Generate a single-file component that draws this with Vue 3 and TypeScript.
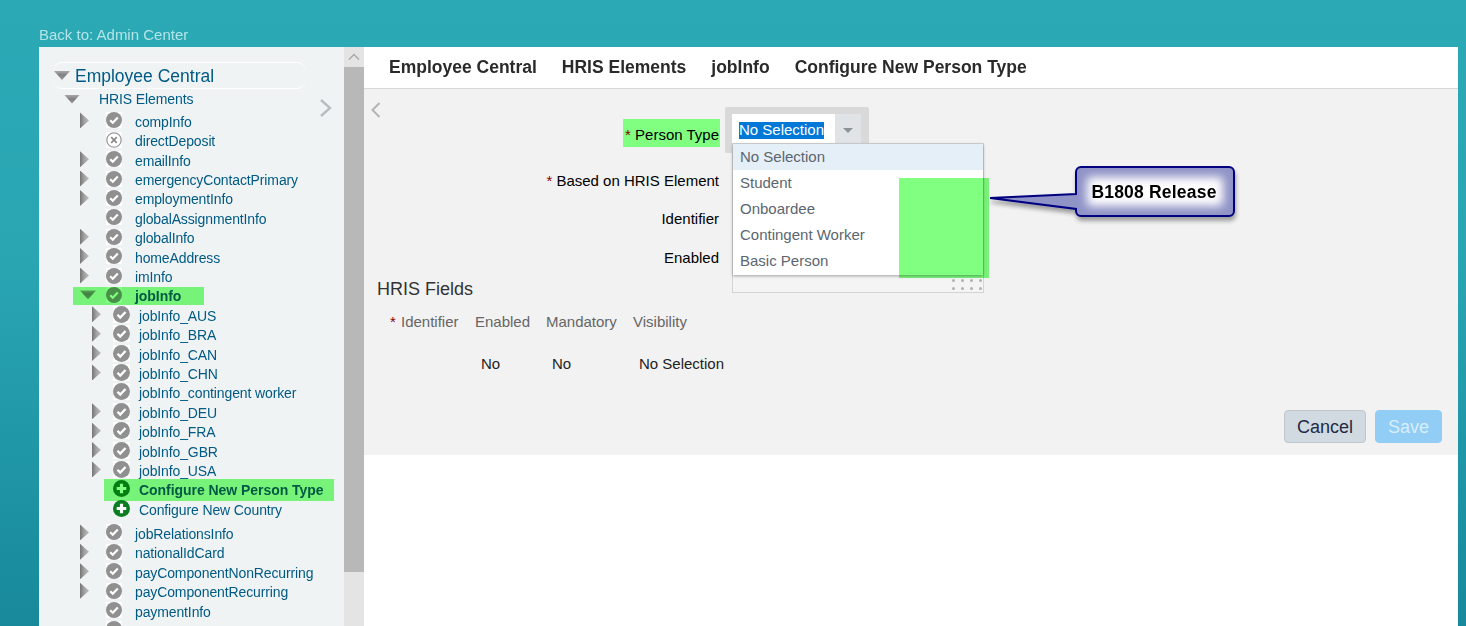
<script setup lang="ts">
interface Row { label: string; level: 1 | 2; arrow?: boolean; open?: boolean; icon: 'check' | 'cross' | 'plus'; mark?: boolean; gap?: boolean }
const rows: Row[] = [
  { label: 'compInfo', level: 1, arrow: true, icon: 'check' },
  { label: 'directDeposit', level: 1, icon: 'cross' },
  { label: 'emailInfo', level: 1, arrow: true, icon: 'check' },
  { label: 'emergencyContactPrimary', level: 1, arrow: true, icon: 'check' },
  { label: 'employmentInfo', level: 1, arrow: true, icon: 'check' },
  { label: 'globalAssignmentInfo', level: 1, icon: 'check' },
  { label: 'globalInfo', level: 1, arrow: true, icon: 'check' },
  { label: 'homeAddress', level: 1, arrow: true, icon: 'check' },
  { label: 'imInfo', level: 1, arrow: true, icon: 'check' },
  { label: 'jobInfo', level: 1, open: true, icon: 'check', mark: true },
  { label: 'jobInfo_AUS', level: 2, arrow: true, icon: 'check' },
  { label: 'jobInfo_BRA', level: 2, arrow: true, icon: 'check' },
  { label: 'jobInfo_CAN', level: 2, arrow: true, icon: 'check' },
  { label: 'jobInfo_CHN', level: 2, arrow: true, icon: 'check' },
  { label: 'jobInfo_contingent worker', level: 2, icon: 'check' },
  { label: 'jobInfo_DEU', level: 2, arrow: true, icon: 'check' },
  { label: 'jobInfo_FRA', level: 2, arrow: true, icon: 'check' },
  { label: 'jobInfo_GBR', level: 2, arrow: true, icon: 'check' },
  { label: 'jobInfo_USA', level: 2, arrow: true, icon: 'check' },
  { label: 'Configure New Person Type', level: 2, icon: 'plus', mark: true },
  { label: 'Configure New Country', level: 2, icon: 'plus' },
  { label: 'jobRelationsInfo', level: 1, arrow: true, icon: 'check', gap: true },
  { label: 'nationalIdCard', level: 1, arrow: true, icon: 'check' },
  { label: 'payComponentNonRecurring', level: 1, arrow: true, icon: 'check' },
  { label: 'payComponentRecurring', level: 1, arrow: true, icon: 'check' },
  { label: 'paymentInfo', level: 1, icon: 'check' },
  { label: '', level: 1, icon: 'check' },
]
const crumbs = ['Employee Central', 'HRIS Elements', 'jobInfo', 'Configure New Person Type']
const options = ['No Selection', 'Student', 'Onboardee', 'Contingent Worker', 'Basic Person']
const columns = ['Identifier', 'Enabled', 'Mandatory', 'Visibility']
</script>

<template>
  <div class="page">
    <a class="back">Back to: Admin Center</a>
    <div class="panel">
      <aside class="side">
        <div class="root">
          <span class="tri-down big"></span>
          <span class="root-text">Employee Central</span>
        </div>
        <div class="hris">
          <span class="tri-down"></span>
          <span>HRIS Elements</span>
        </div>
        <svg class="side-chevron" width="14" height="18" viewBox="0 0 14 18">
          <path d="M2 1l9 8-9 8" fill="none" stroke="#b9bdbf" stroke-width="2.4" />
        </svg>
        <ul class="tree">
          <li v-for="r in rows" :key="r.label" class="row" :class="['l' + r.level, { gap: r.gap, mark: r.mark }]">
            <span class="arrow-cell">
              <span v-if="r.arrow" class="tri-right"></span>
              <span v-else-if="r.open" class="tri-down"></span>
            </span>
            <svg v-if="r.icon === 'check'" class="ico" viewBox="0 0 16 16">
              <rect width="16" height="16" fill="#fff" />
              <circle cx="8" cy="8" r="8" fill="#909090" />
              <path d="M4.2 8.2l2.6 2.6 5-5.2" fill="none" stroke="#fff" stroke-width="2.2" />
            </svg>
            <svg v-else-if="r.icon === 'cross'" class="ico" viewBox="0 0 16 16">
              <rect width="16" height="16" fill="#fff" />
              <circle cx="8" cy="8" r="7.2" fill="#fff" stroke="#9c9c9c" stroke-width="1.3" />
              <path d="M5.2 5.2l5.6 5.6M10.8 5.2l-5.6 5.6" stroke="#8c8c8c" stroke-width="1.8" />
            </svg>
            <svg v-else class="ico" viewBox="0 0 16 16">
              <circle cx="8" cy="8" r="8" fill="#0a7d22" />
              <path d="M8 3.5v9M3.5 8h9" stroke="#fff" stroke-width="3" />
            </svg>
            <span class="label">{{ r.label }}</span>
            <span v-if="r.mark" class="hl"></span>
          </li>
        </ul>
      </aside>

      <div class="scroll">
        <div class="scroll-up">
          <svg width="12" height="8" viewBox="0 0 12 8"><path d="M1 6.5l5-5 5 5" fill="none" stroke="#a8a8a8" stroke-width="1.4" /></svg>
        </div>
        <div class="thumb"></div>
      </div>

      <main class="main">
        <header class="crumbs">
          <span v-for="c in crumbs" :key="c">{{ c }}</span>
        </header>

        <section class="form">
          <svg class="form-chevron" width="10" height="16" viewBox="0 0 10 16">
            <path d="M8.5 1L1.5 8l7 7" fill="none" stroke="#b4b4b4" stroke-width="2" />
          </svg>

          <div class="fields">
            <div class="field f1">
              <label class="lab marked"><i>*</i> Person Type</label>
              <div class="select-wrap">
                <div class="select">
                  <span class="value"><span class="sel">No Selection</span></span>
                  <span class="drop"><span class="drop-tri"></span></span>
                </div>
                <div class="menu">
                  <ul class="list">
                    <li v-for="(o, i) in options" :key="o" :class="{ active: i === 0 }">{{ o }}</li>
                  </ul>
                  <div class="grip"><span v-for="n in 8" :key="n"></span></div>
                </div>
              </div>
            </div>
            <div class="field f2"><label class="lab"><i>*</i> Based on HRIS Element</label></div>
            <div class="field f3"><label class="lab">Identifier</label></div>
            <div class="field f4"><label class="lab">Enabled</label></div>
          </div>

          <h2 class="sub">HRIS Fields</h2>
          <div class="thead">
            <span class="c1"><i>*</i> {{ columns[0] }}</span>
            <span class="c2">{{ columns[1] }}</span>
            <span class="c3">{{ columns[2] }}</span>
            <span class="c4">{{ columns[3] }}</span>
          </div>
          <div class="tbody">
            <span class="d2">No</span>
            <span class="d3">No</span>
            <span class="d4">No Selection</span>
          </div>
          <div class="actions">
            <button class="btn cancel">Cancel</button>
            <button class="btn save">Save</button>
          </div>

          <span class="green-box"></span>
          <div class="callout">
            <svg width="252" height="64" viewBox="0 0 252 64">
              <defs>
                <filter id="sh" x="-10%" y="-20%" width="120%" height="150%">
                  <feDropShadow dx="1" dy="4" stdDeviation="2" flood-color="#000" flood-opacity="0.35" />
                </filter>
                <filter id="bl" x="-20%" y="-40%" width="140%" height="180%">
                  <feGaussianBlur stdDeviation="5" />
                </filter>
              </defs>
              <path d="M87 6a5 5 0 0 1 5-5h148a5 5 0 0 1 5 5v39a5 5 0 0 1-5 5H92a5 5 0 0 1-5-5v-2L1 32l86-4z" fill="#8f93c6" stroke="#000080" stroke-width="2" filter="url(#sh)" />
              <rect x="98" y="11" width="136" height="29" rx="3" fill="#fff" filter="url(#bl)" />
            </svg>
            <span class="callout-text">B1808 Release</span>
          </div>
        </section>
      </main>
    </div>
  </div>
</template>

<style>
html, body { margin: 0; height: 100%; overflow: hidden; }
</style>

<style scoped>
* { box-sizing: border-box; }
.page {
  height: 626px;
  overflow: hidden;
  background: linear-gradient(180deg, #2ba9b5 0%, #2aa6b3 40%, #17899b 100%);
  padding: 26px 8px 0 39px;
  font-family: "Liberation Sans", Arial, sans-serif;
}
.back { display: block; height: 21px; font-size: 15px; line-height: 17px; color: #b2e5e7; }
.panel { display: flex; height: 579px; background: #fff; border-radius: 2px 0 0 0; }

.side { position: relative; width: 305px; flex: none; background: #eff3f4; padding: 15px 39px 0 15px; overflow: hidden; }
.root {
  display: flex; align-items: center; gap: 5px; height: 27px; width: 251px;
  border-top: 1px solid #fff; border-bottom: 1px solid #fff; border-radius: 8px;
  color: #005a84; font-size: 17.5px;
}
.root-text { padding-top: 2px; }
.hris { display: flex; align-items: center; height: 20px; padding-left: 10px; color: #005a84; font-size: 14px; letter-spacing: -0.1px; }
.hris span:last-child { margin-left: 19px; }
.side-chevron { position: absolute; left: 280px; top: 52px; }
.tri-down { display: inline-block; flex: none; width: 16px; height: 9px; clip-path: polygon(0 0, 100% 0, 50% 100%); background: linear-gradient(180deg, #a8a8a8 0%, #808080 45%, #9a9a9a 100%); }
.tri-right { display: inline-block; flex: none; width: 9px; height: 16px; clip-path: polygon(0 0, 100% 50%, 0 100%); background: linear-gradient(90deg, #757575 0%, #a0a0a0 45%, #bcbcbc 100%); }

.tree { list-style: none; margin: 3.2px 0 0; padding: 0; width: 340px; }
.row { position: relative; display: flex; align-items: center; height: 19.4px; color: #005a84; font-size: 14px; letter-spacing: -0.12px; white-space: nowrap; }
.row.gap { margin-top: 4.9px; }
.row.mark .label { font-weight: 700; letter-spacing: -0.05px; }
.row .arrow-cell { display: flex; align-items: center; width: 26px; height: 16px; flex: none; margin-top: -3px; }
.row.l1 { padding-left: 26px; }
.row.l2 { padding-left: 38px; }
.row.l2 .arrow-cell { width: 21px; }
.ico { flex: none; width: 16px; height: 16px; margin-top: -3px; }
.row.l2 .ico { width: 17px; height: 17px; }
.row.l1 .label { margin-left: 13px; }
.row.l2 .label { margin-left: 9px; }
.hl { position: absolute; background: #80ff80; mix-blend-mode: multiply; }
.row.l1 .hl { left: 19px; top: 0; width: 131px; height: 18px; }
.row.l2 .hl { left: 50px; top: -2px; width: 230px; height: 22px; }

.scroll { width: 20px; flex: none; background: #e4e4e4; }
.scroll-up { display: flex; align-items: center; justify-content: center; height: 20px; }
.thumb { height: 505px; background: #b8b8b8; }

.main { flex: 1; min-width: 0; }
.crumbs { display: flex; gap: 25px; height: 41px; padding: 10px 0 0 25px; font-size: 17.5px; font-weight: 700; line-height: 21px; color: #2a2a2a; }
.form { position: relative; height: 367px; background: #f2f2f2; border-top: 1px solid #d8d8d8; color: #000; }
.form-chevron { position: absolute; left: 7px; top: 13px; }

.fields { position: relative; height: 190px; }
.field { position: absolute; left: 0; width: 355px; text-align: right; }
.f1 { top: 0; width: 100%; }
.f2 { top: 82px; }
.f3 { top: 120px; }
.f4 { top: 159px; }
.lab { display: block; font-size: 15px; line-height: 20px; }
.lab i { font-style: normal; color: #8a0000; }
.f1 .lab { position: absolute; left: 259px; top: 30px; width: 97px; height: 28px; line-height: 31px; padding-right: 1px; white-space: nowrap; background: #80ff80; }

.select-wrap { position: absolute; left: 361px; top: 18px; width: 144px; height: 46px; background: #d9d9d9; border-radius: 2px; text-align: left; }
.select { display: flex; position: absolute; left: 7px; top: 7px; width: 129px; height: 29px; }
.value { flex: 1; background: #fff; padding: 7px 0 0 7px; font-size: 15px; line-height: 18px; }
.sel { background: #0078d7; color: #fff; display: inline-block; height: 17px; line-height: 16px; }
.drop { display: flex; align-items: center; justify-content: center; width: 26px; background: #e0e4e7; }
.drop-tri { width: 0; height: 0; margin-top: 3px; border-left: 5px solid transparent; border-right: 5px solid transparent; border-top: 5px solid #8d9499; }
.menu { position: absolute; left: 7px; top: 36px; width: 252px; height: 150px; background: #f4f4f4; border: 1px solid #d4d4d4; }
.list { list-style: none; margin: 0; padding: 0; height: 131px; background: #fff; box-shadow: 0 1px 3px rgba(0, 0, 0, 0.35); }
.list li { height: 26px; padding-left: 7px; font-size: 15px; line-height: 26px; color: #5c6670; }
.list li.active { background: #e4eff7; }
.grip { position: absolute; right: 3px; bottom: 2px; width: 28px; display: grid; grid-template-columns: repeat(4, 3px); gap: 5px 6px; }
.grip span { width: 3px; height: 3px; border-radius: 50%; background: #b0b0b0; }

.sub { margin: 0; padding-left: 13px; font-size: 18px; font-weight: 400; line-height: 21px; color: #333; }
.thead, .tbody { position: relative; height: 20px; font-size: 15px; line-height: 20px; }
.thead { margin-top: 12px; color: #666; }
.thead i { font-style: normal; color: #8a0000; }
.tbody { margin-top: 22px; color: #222; }
.thead span, .tbody span { position: absolute; top: 0; white-space: nowrap; }
.c1 { left: 26px; word-spacing: 1px; } .c2 { left: 111px; } .c3 { left: 182px; } .c4 { left: 269px; }
.d2 { left: 117px; } .d3 { left: 188px; } .d4 { left: 275px; }

.actions { display: flex; justify-content: flex-end; gap: 9px; padding-right: 16px; margin-top: 36px; }
.btn { height: 33px; border-radius: 4px; font: 18px/1 "Liberation Sans", Arial, sans-serif; }
.cancel { width: 82px; background: #d2dae1; border: 1px solid #bfc7ce; color: #1f2a44; }
.save { width: 67px; background: #91cdf5; border: 1px solid #91cdf5; color: #d8eefb; }

.green-box { position: absolute; left: 535px; top: 89px; width: 90px; height: 100px; background: #80ff80; mix-blend-mode: multiply; }
.callout { position: absolute; left: 625px; top: 77px; width: 252px; height: 64px; }
.callout svg { display: block; overflow: visible; }
.callout-text { position: absolute; left: 100px; top: 16px; width: 130px; text-align: center; font-size: 17.5px; font-weight: 700; line-height: 20px; letter-spacing: 0.2px; color: #000; white-space: nowrap; }
</style>
